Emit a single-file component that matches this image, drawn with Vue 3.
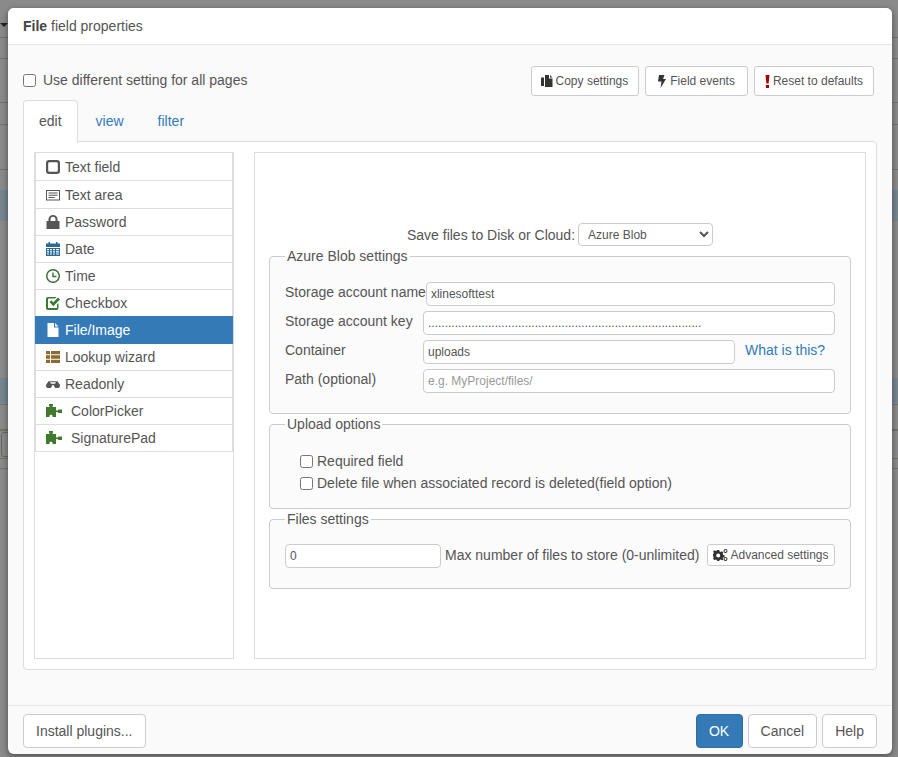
<template>
  <div class="page">
    <!-- page behind the modal, only its edges can be seen -->
    <div class="backdrop">
      <div v-for="(row, i) in backRows" :key="i" class="back-row" :class="row.kind" :style="{ height: row.h + 'px' }"></div>
      <span class="back-caret"></span>
      <span class="back-control"></span>
    </div>

    <div class="dialog">
      <div class="dialog-head"><b>File</b> field properties</div>

      <div class="dialog-body">
        <div class="toolbar">
          <label class="check-main">
            <input type="checkbox" />
            <span>Use different setting for all pages</span>
          </label>
          <div class="tool-buttons">
            <button class="btn-small copy">
              <svg width="12" height="12" viewBox="0 0 12 12"><path fill="#333" d="M4 0h4v3.500h3.500V12H4zM9 0l2.500 2.500H9zM0 2.500h3V11H0z"/></svg>
              Copy settings
            </button>
            <button class="btn-small events">
              <svg width="8" height="13" viewBox="0 0 8 13"><path fill="#333" d="M1 0h5.500L5 4h3L2.500 13l1-6.500H0z"/></svg>
              Field events
            </button>
            <button class="btn-small reset">
              <svg width="5" height="13" viewBox="0 0 5 13"><path fill="#a80000" d="M.5 0h4L3.600 8.500H1.400zM.9 10h3.200v3H.9z"/></svg>
              Reset to defaults
            </button>
          </div>
        </div>

        <div class="tabs">
          <a v-for="tab in tabs" :key="tab" class="tab" :class="{ active: tab === 'edit' }">{{ tab }}</a>
        </div>

        <div class="tab-panel">
          <ul class="type-list">
            <li v-for="t in types" :key="t.name" class="type-item" :class="{ selected: t.name === 'File/Image' }">
              <span class="type-icon" :class="{ plugin: t.plugin }">
                <svg :width="t.plugin ? 16 : 14" height="14" :viewBox="t.plugin ? '0 0 16 14' : '0 0 14 14'">
                  <path :fill="t.name === 'File/Image' ? '#fff' : t.color" fill-rule="evenodd" :d="t.icon" />
                </svg>
              </span>
              {{ t.name }}
            </li>
          </ul>

          <div class="settings">
            <div class="save-row">
              <span>Save files to Disk or Cloud:</span>
              <select class="save-select">
                <option>Azure Blob</option>
              </select>
            </div>

            <fieldset class="azure">
              <legend>Azure Blob settings</legend>
              <div class="form-row">
                <label>Storage account name</label>
                <input type="text" value="xlinesofttest" />
              </div>
              <div class="form-row">
                <label>Storage account key</label>
                <input type="text" :value="keyDots" />
              </div>
              <div class="form-row">
                <label>Container</label>
                <input type="text" value="uploads" />
                <a class="help-link">What is this?</a>
              </div>
              <div class="form-row">
                <label>Path (optional)</label>
                <input type="text" placeholder="e.g. MyProject/files/" />
              </div>
            </fieldset>

            <fieldset class="upload">
              <legend>Upload options</legend>
              <label class="check-row"><input type="checkbox" /><span>Required field</span></label>
              <label class="check-row"><input type="checkbox" /><span>Delete file when associated record is deleted(field option)</span></label>
            </fieldset>

            <fieldset class="files">
              <legend>Files settings</legend>
              <div class="files-row">
                <input type="text" value="0" />
                <span>Max number of files to store (0-unlimited)</span>
                <button class="btn-adv">
                  <svg width="15" height="12" viewBox="0 0 15 12"><path fill="#333" fill-rule="evenodd" d="M4.200 1h2.100l.3 1.400 1.200.5L9 2.200l1.400 1.400-.7 1.200.5 1.200 1.300.3v2l-1.300.3-.5 1.200.7 1.200L9 11.200l-1.200-.7-1.200.5-.3 1H4.200l-.3-1-1.200-.5-1.200.7L.1 9.800l.7-1.200-.5-1.200L0 7.100v-2l.3-.1.5-1.200-.7-1.200 1.400-1.400 1.200.7 1.200-.5zM5.200 4.500a2 2 0 1 0 0 4 2 2 0 0 0 0-4z"/><path fill="#333" fill-rule="evenodd" d="M12.500 0a2 2 0 1 1 0 4 2 2 0 0 1 0-4zm0 1a1 1 0 1 0 0 2 1 1 0 0 0 0-2zM12.500 8a2 2 0 1 1 0 4 2 2 0 0 1 0-4zm0 1a1 1 0 1 0 0 2 1 1 0 0 0 0-2z"/></svg>
                  Advanced settings
                </button>
              </div>
            </fieldset>
          </div>
        </div>
      </div>

      <div class="dialog-foot">
        <button class="btn">Install plugins...</button>
        <div class="foot-right">
          <button class="btn primary">OK</button>
          <button class="btn">Cancel</button>
          <button class="btn">Help</button>
        </div>
      </div>
    </div>
  </div>
</template>

<script setup>
const tabs = ['edit', 'view', 'filter']

const keyDots = '.'.repeat(82)

const puzzle = 'M3 0h4v1.500L6.200 3H10v3.500h1.500l1-1H16V9h-3.500l-1-1H10v5H6.500v-1.500L5 10.500l-1.500 1V13H0V3h3.800L3 1.500z'

const types = [
  { name: 'Text field', color: '#555', icon: 'M3 0h8a3 3 0 0 1 3 3v8a3 3 0 0 1-3 3H3a3 3 0 0 1-3-3V3a3 3 0 0 1 3-3zM3.500 2.200A1.300 1.300 0 0 0 2.200 3.500v7a1.300 1.300 0 0 0 1.300 1.300h7a1.300 1.300 0 0 0 1.300-1.300v-7a1.300 1.300 0 0 0-1.300-1.300z' },
  { name: 'Text area', color: '#555', icon: 'M0 2h14v10.500H0zM1 3v8.500h12V3zM2.500 4.500h9v1h-9zM2.500 6.700h9v1h-9zM2.500 8.900h6v1h-6z' },
  { name: 'Password', color: '#555', icon: 'M.5 6h2V4a4.500 4 0 0 1 9 0v2h2v8H.5zM4.500 6h5V4a2.500 2.200 0 0 0-5 0z' },
  { name: 'Date', color: '#2a6a96', icon: 'M0 1.500h2.500V0H4v1.500h6V0h1.500v1.500H14V5H0zM0 6h14v8H0zM1 7v1.200h2V7zM4 7v1.200h2V7zM7 7v1.200h2V7zM10 7v1.200h3V7zM1 9.200v1.200h2V9.200zM4 9.200v1.200h2V9.200zM7 9.200v1.200h2V9.200zM10 9.200v1.200h3V9.200zM1 11.400v1.200h2v-1.200zM4 11.400v1.200h2v-1.200zM7 11.400v1.200h2v-1.200zM10 11.400v1.200h3v-1.200z' },
  { name: 'Time', color: '#3a7034', icon: 'M7 0a7 7 0 1 1 0 14A7 7 0 0 1 7 0zm0 1.500a5.500 5.500 0 1 0 0 11 5.500 5.500 0 0 0 0-11zM6.300 3.500h1.400v3.300h2.800v1.400H6.300z' },
  { name: 'Checkbox', color: '#3a7a34', icon: 'M2 1h8.500L9 2.500H2.500A.5.5 0 0 0 2 3v8.500a.5.5 0 0 0 .5.5h8a.5.5 0 0 0 .5-.5V8.500L12.500 7v5a2 2 0 0 1-2 2H2a2 2 0 0 1-2-2V3a2 2 0 0 1 2-2zM3.500 6l1.800-1.800 2 2L12 1.500l2 2-6.700 6.700z' },
  { name: 'File/Image', color: '#fff', icon: 'M1.500 0H8v4.500h4.500V14h-11zM9 0l3.500 3.500H9z' },
  { name: 'Lookup wizard', color: '#8c6a33', icon: 'M0 1h4v3.300H0zM5 1h9v3.300H5zM0 5.300h4v3.400H0zM5 5.300h9v3.400H5zM0 9.700h4V13H0zM5 9.700h9V13H5z' },
  { name: 'Readonly', color: '#555', icon: 'M2.500 4.200h9L14 8a3 3 0 0 1-6 .2H6A3 3 0 0 1 0 8zM4 5.200h6L9 6.800H5z' },
  { name: 'ColorPicker', color: '#3f7a2f', icon: puzzle, plugin: true },
  { name: 'SignaturePad', color: '#3f7a2f', icon: puzzle, plugin: true },
]

// what can be seen of the table behind the overlay
const backRows = [
  { h: 38, kind: 'line' },
  { h: 21, kind: 'line' },
  { h: 44, kind: 'line' },
  { h: 22, kind: 'line' },
  { h: 45, kind: 'line' },
  { h: 20, kind: '' },
  { h: 31, kind: 'blue' },
  { h: 157, kind: '' },
  { h: 25, kind: 'blue' },
  { h: 2, kind: 'line' },
  { h: 25, kind: 'line' },
  { h: 29, kind: 'olive' },
  { h: 10, kind: 'line' },
]
</script>

<style>
html, body {
  margin: 0;
  padding: 0;
}
</style>

<style scoped>
.page {
  position: relative;
  width: 898px;
  height: 757px;
  overflow: hidden;
  background: #8a8a8a;
  font-family: "Liberation Sans", Arial, sans-serif;
  font-size: 14px;
  color: #555;
  padding: 8px 6px 3px 8px;
  box-sizing: border-box;
  display: flex;
}

.backdrop {
  position: absolute;
  inset: 0;
}

.back-row {
  box-sizing: border-box;
}

.back-row.line {
  border-bottom: 1px solid #727272;
}

.back-row.olive {
  border-top: 1px solid #6e7360;
  border-bottom: 1px solid #6e7360;
}

.back-row.blue {
  background: #76858f;
}

.back-caret {
  position: absolute;
  left: 0;
  top: 23px;
  border-left: 4px solid transparent;
  border-right: 4px solid transparent;
  border-top: 4px solid #222;
}

.back-control {
  position: absolute;
  left: 1px;
  top: 432px;
  width: 20px;
  height: 25px;
  border: 1px solid #666;
  border-radius: 3px;
  box-sizing: border-box;
}

.dialog {
  position: relative;
  flex: 1;
  display: flex;
  flex-direction: column;
  background: #fafafa;
  border-radius: 6px;
  box-shadow: 0 2px 6px rgba(0, 0, 0, 0.45);
}

.dialog-head {
  height: 36px;
  line-height: 36px;
  padding-left: 15px;
  background: #fff;
  border-bottom: 1px solid #e5e5e5;
  border-radius: 6px 6px 0 0;
}

.dialog-head b {
  color: #444;
}

.dialog-body {
  flex: 1;
  padding: 21px 15px 0;
}

.toolbar {
  display: flex;
  justify-content: space-between;
  align-items: center;
  height: 30px;
  margin-right: 3px;
}

.check-main {
  display: flex;
  align-items: center;
  gap: 7px;
  margin-top: -2px;
}

.check-main input,
.check-row input {
  margin: 0;
  width: 13px;
  height: 13px;
}

.tool-buttons {
  display: flex;
  gap: 6px;
}

.btn-small {
  height: 30px;
  padding: 0 10px;
  background: #fff;
  border: 1px solid #ccc;
  border-radius: 3px;
  font-family: inherit;
  font-size: 12px;
  color: #555;
  display: flex;
  align-items: center;
  gap: 3px;
}

.btn-small.copy {
  padding: 0 10px 0 9px;
}

.btn-small.events {
  padding: 0 12px;
  gap: 4px;
}

.tabs {
  display: flex;
  margin-top: 4px;
  height: 41px;
}

.tab {
  padding: 0 15px;
  margin-right: 2px;
  line-height: 41px;
  color: #337ab7;
  border: 1px solid transparent;
  border-bottom: 0;
  border-radius: 4px 4px 0 0;
}

.tab.active {
  height: 42px;
  color: #555;
  background: #fff;
  border-color: #ddd;
  position: relative;
  z-index: 1;
}

.tab-panel {
  height: 529px;
  box-sizing: border-box;
  padding: 10px;
  display: flex;
  gap: 20px;
  background: #fff;
  border: 1px solid #ddd;
  border-radius: 0 4px 4px 4px;
}

.type-list {
  width: 200px;
  box-sizing: border-box;
  margin: 0;
  padding: 0;
  list-style: none;
  border: 1px solid #ddd;
  flex-shrink: 0;
}

.type-item {
  height: 27px;
  box-sizing: border-box;
  display: flex;
  align-items: center;
  padding-left: 10px;
  background: #fff;
  border: 1px solid #ddd;
  border-top: 0;
}

.type-item:first-child {
  height: 28px;
  border-top: 0;
}

.type-item:nth-child(2) {
  height: 28px;
}

.type-item.selected {
  background: #337ab7;
  color: #fff;
  border-color: #337ab7;
  height: 28px;
  margin-top: -1px;
}

.type-icon {
  width: 19px;
  display: flex;
}

.type-icon.plugin {
  width: 25px;
}

.settings {
  flex: 1;
  border: 1px solid #ddd;
  padding: 70px 14px 0;
}

.save-row {
  display: flex;
  justify-content: center;
  align-items: center;
  gap: 3px;
  height: 23px;
}

.save-select {
  width: 135px;
  height: 23px;
  padding-left: 5px;
  background: #fff;
  border: 1px solid #ccc;
  border-radius: 4px;
  font-family: inherit;
  font-size: 12px;
  color: #555;
}

fieldset {
  margin: 0;
  min-width: 0;
  background: #fbfbfb;
  border: 1px solid #ccc;
  border-radius: 4px;
  padding: 0 15px;
}

legend {
  padding: 0 2px;
  line-height: 20px;
  font-size: 14px;
}

.azure {
  padding-top: 16px;
  padding-bottom: 20px;
}

.upload {
  padding-top: 16px;
  padding-bottom: 14px;
}

.files {
  padding-top: 15px;
  padding-bottom: 20px;
}

.form-row {
  display: flex;
  margin-bottom: 5px;
}

.form-row:last-child {
  margin-bottom: 0;
}

.form-row label {
  min-width: 138px;
  line-height: 20px;
  white-space: nowrap;
}

input[type="text"] {
  height: 24px;
  box-sizing: border-box;
  min-width: 0;
  padding: 0 4px;
  background: #fff;
  border: 1px solid #ccc;
  border-radius: 4px;
  font-family: inherit;
  font-size: 12px;
  color: #555;
  outline: none;
}

.form-row input {
  flex: 1;
}

input::placeholder {
  color: #999;
  opacity: 1;
}

.help-link {
  width: 90px;
  margin-left: 10px;
  line-height: 20px;
  color: #337ab7;
}

.check-row {
  display: flex;
  align-items: center;
  gap: 4px;
  height: 22px;
  padding-left: 15px;
}

.files-row {
  display: flex;
  align-items: flex-start;
}

.files-row input {
  width: 156px;
  margin-right: 4px;
}

.files-row span {
  line-height: 22px;
}

.btn-adv {
  height: 22px;
  width: 128px;
  margin-left: auto;
  padding: 0;
  background: #fff;
  border: 1px solid #ccc;
  border-radius: 3px;
  font-family: inherit;
  font-size: 12px;
  color: #555;
  display: flex;
  align-items: center;
  justify-content: center;
  gap: 2px;
}

.dialog-foot {
  display: flex;
  justify-content: space-between;
  padding: 8px 15px 6px;
  border-top: 1px solid #e5e5e5;
}

.foot-right {
  display: flex;
  gap: 5px;
}

.btn {
  height: 34px;
  padding: 0 12px;
  background: #fff;
  border: 1px solid #ccc;
  border-radius: 4px;
  font-family: inherit;
  font-size: 14px;
  color: #555;
}

.btn.primary {
  width: 47px;
  background: #337ab7;
  border-color: #2e6da4;
  color: #fff;
}
</style>
